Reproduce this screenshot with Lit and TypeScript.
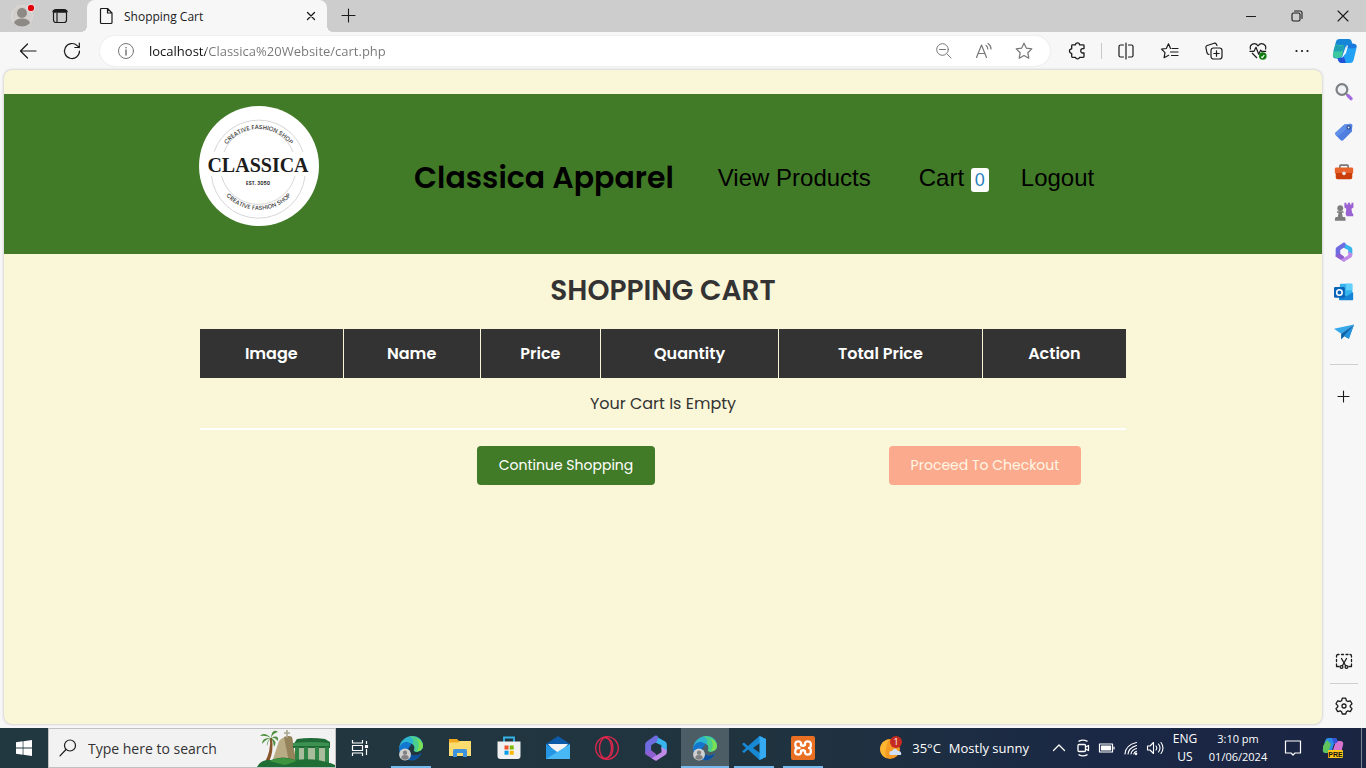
import { LitElement, html, css, svg } from "lit";
import { customElement } from "lit/decorators.js";
import { classMap } from "lit/directives/class-map.js";

const line = (size: number, body: unknown, width = 1) => html`<svg
  width=${size} height=${size} viewBox="0 0 20 20" fill="none" stroke="currentColor"
  stroke-width=${width} stroke-linecap="round" stroke-linejoin="round" aria-hidden="true">${body}</svg>`;

const art = (size: number, body: unknown) => html`<svg
  width=${size} height=${size} viewBox="0 0 24 24" aria-hidden="true">${body}</svg>`;

const office = (size: number) => art(size, svg`
  <path d="M11 .8L20.500 6Q22 7 22 9v6l-5-2V9.500L9.500 6z" fill="#39b5ee"/>
  <path d="M11 .8q1-.6 2 0l1 .7-1 4.500-5.500 3.500V16L2 18V8.500Q2 7 3.500 6z" fill="#6f6be0"/>
  <path d="M2 15.500l5.500-1.500 4.500 3.500 1 5.700q-1 .6-2 0l-7.500-4.500Q2 17.500 2 15.500z" fill="#8d5fd0"/>
  <path d="M17 11l5 3v1.500q0 2-1.500 3L13 23.200q-1 .6-2 0l-3-1.800 9-5.400z" fill="#c08be8"/>`);

const icons = {
  back: () => line(20, svg`<path d="M18 10H2.500M9.500 3l-7 7 7 7"/>`, 1.2),
  reload: () => line(20, svg`<path d="M17.500 10a7.500 7.500 0 1 1-2.300-5.400L17.300 6.500M17.300 2v4.500h-4.500"/>`, 1.2),
  info: () => line(20, svg`<circle cx="10" cy="10" r="7.500"/><path d="M10 9v5M10 6.500v.3" stroke-width="1.500"/>`),
  zoomOut: () => line(20, svg`<circle cx="8.500" cy="8.500" r="5.800"/><path d="M13 13l4 4M5.500 8.500h6"/>`),
  readAloud: () => line(20, svg`<path d="M2.500 16.500L7.500 4l5 12.500M4.300 12.500h6.500M12 4.500c1.200.8 1.800 2 1.800 3.500M14 2.500c2 1.300 3 3.200 3 5.500"/>`, 1.2),
  star: () => line(20, svg`<path d="M10 2.200l2.400 5 5.400.7-4 3.800 1 5.500-4.800-2.700-4.800 2.700 1-5.500-4-3.800 5.400-.7z"/>`, 1.2),
  puzzle: () => line(20, svg`<path d="M5.500 3.800h3c0-2.600 4-2.600 4 0h3.700q.8 0 .8.800v3h-1.300c-2.600 0-2.600 4.400 0 4.400h1.300v3.600q0 .8-.8.800h-3.700c-.3 2-3.700 2-4 0h-3q-.8 0-.8-.8v-3.200c-3 0-3-4.600 0-4.600V4.600q0-.8.8-.8z"/>`, 1.3),
  split: () => line(20, svg`<path d="M7.500 4H4.500Q3 4 3 5.500v9Q3 16 4.500 16h3M12.500 4h3Q17 4 17 5.500v9q0 1.500-1.500 1.500h-3M10 2v16"/>`, 1.2),
  favourites: () => line(20, svg`<path d="M10.500 7.500L8.500 2.800 6.300 7.500l-4.800.7 3.500 3.500-.9 5 4.600-2.400M12 7.500h6M10.500 11h7.500M11.500 14.500h6.500"/>`, 1.2),
  collections: () => line(20, svg`<rect x="7" y="7" width="11" height="11" rx="2.500"/><path d="M12.500 9.800v5.400M9.800 12.500h5.400M5 13.500l-.8-.3Q3.500 13 3 11.800L1.900 6.500q-.2-1.500 1.300-2l7-2.300q1.500-.3 2.200 1L13 4.500"/>`, 1.2),
  heart: () => html`<svg width="20" height="20" viewBox="0 0 20 20" fill="none" stroke="currentColor" stroke-width="1.2" stroke-linejoin="round" aria-hidden="true"><path d="M2.500 8.500C1 3 7 .8 10 4.800 13 .8 19 3 17.500 8.500M4 12l5 5M1.500 10.300H6l2-4 2.700 7 2-4.300 1 1.300h4.500"/><circle cx="14.800" cy="15" r="3.800" fill="#107c10" stroke="none"/><path d="M13.300 15.800l1 .8 2-2.600" stroke="#fff"/></svg>`,
  dots: () => line(20, svg`<path d="M4.500 10h.01M10 10h.01M15.500 10h.01"/>`, 2.2),
  close: () => line(20, svg`<path d="M6.500 6.500l7 7M13.500 6.500l-7 7"/>`, 1.3),
  winClose: () => line(20, svg`<path d="M5 5l10 10M15 5L5 15"/>`, 1.1),
  minimise: () => line(20, svg`<path d="M5.500 10.500h9"/>`, 1.1),
  restore: () => line(20, svg`<rect x="5" y="7" width="8" height="8" rx="1.500"/><path d="M7.500 5h5.500q2 0 2 2v5.500"/>`, 1.1),
  plus: () => line(20, svg`<path d="M9.500 3v13M3 9.500h13"/>`, 1.1),
  plusSmall: () => line(20, svg`<path d="M9.500 4v11M4 9.500h11"/>`, 1.1),
  page: () => line(20, svg`<path d="M5 2.500h6.500L16 7v9.500q0 1-1 1H5.500q-1 0-1-1v-13q0-1 1-1M11.500 2.500V7H16"/>`, 1.2),
  workspaces: () => line(20, svg`<rect x="3.500" y="3.500" width="13" height="13" rx="2.500"/><path d="M4 5.200h12" stroke-width="3"/><path d="M7 7v9"/>`, 1.2),
  snip: () => line(20, svg`<path d="M2.500 15V13M2.500 10.500v-2M2.500 6V5q0-1.500 1.500-1.500h1M7.500 3.500h2M12 3.500h2M16 3.500q1.500 0 1.500 1.500v1M17.500 8.500v2M17.500 13v2M2.500 15.500h2.500M15 15.500h2.500M7.500 7.500l4 7M12.500 7.500l-4 7"/><circle cx="7.500" cy="16" r="1.400"/><circle cx="12.500" cy="16" r="1.400"/>`, 1.3),
  gear: () => line(20, svg`<circle cx="10" cy="10" r="2"/><path d="M8.300 2.200h3.400l.7 2.500 1.400.8 2.500-.7 1.700 3-1.800 1.800v1.200l1.800 1.800-1.700 3-2.500-.7-1.400.8-.7 2.300H8.300l-.7-2.300-1.400-.8-2.500.7-1.700-3 1.800-1.800V9.600L2 7.800l1.700-3 2.500.7 1.400-.8z"/>`, 1.3),
  search: () => line(20, svg`<circle cx="12" cy="7.500" r="5.500"/><path d="M8 11.500L2 17.800"/>`, 1.2),

  copilot: () => art(26, svg`
    <path d="M7 1h8.500q2 0 2.600 2l1 3.500h-4q-2 0-2.700 2L9.500 17q-.8 2-3 2H4q-4 0-3-4.500L3.500 4Q4.300 1 7 1z" fill="#1687d8"/>
    <path d="M1 14.500L3.300 6l8 1-2 9.300Q8.500 18.500 6.500 18.500H4q-4 0-3-4z" fill="#3dc8a0"/>
    <path d="M3.300 6q4 2 8 1l-1.500 5q-4 1-8.500 0z" fill="#1fa3b4"/>
    <path d="M17 23H8.500q-2 0-2.600-2L5 18.500h2q3.500 0 4.200-3l2.300-8.300q.6-2 2.800-2h3.200q4 0 3 4.500L20 20q-.8 3-3 3z" fill="#22a2f5"/>
    <path d="M14 6q1-.8 2.300-.8h3.200q3.500 0 3.200 3.300-4 2-9.500.5z" fill="#1c78dc"/>
    <path d="M5 18.500h3q2 0 3-1.500l1.800 6H8.500q-2 0-2.600-2z" fill="#2352d4"/>
    <path d="M13.800 7l-3.300 9q1.800-.3 2.500-2.500l1.800-6.500z" fill="#fff"/>`),
  sideSearch: () => art(20, svg`<circle cx="9.500" cy="9" r="6.500" fill="#eef2f5" stroke="#7d8083" stroke-width="2.600"/><path d="M14.500 14l2 2" stroke="#7d8083" stroke-width="2.500"/><path d="M17 16.500l3.500 3.500" stroke="#a36be0" stroke-width="4" stroke-linecap="round"/>`),
  tag: () => art(20, svg`<path d="M12.500 3L20 2q2 0 2 2l-.5 7.500L11 22q-1.500 1-3 0L2 15.500q-1-1.500 0-3z" fill="#4f7fe0"/><path d="M2 12.500L12.500 3 20 2l1.500 1L4 17.500l-2-2q-1-1.500 0-3z" fill="#6190e8"/><circle cx="17.500" cy="6.500" r="2.600" fill="#2a4a93"/><circle cx="17.500" cy="6.500" r="1.200" fill="#dce8ff"/>`),
  toolbox: () => art(22, svg`<path d="M7.500 8V5.500q0-1 1-1h7q1 0 1 1V8" fill="none" stroke="#777" stroke-width="1.800"/><rect x="2" y="7" width="20" height="7" rx="1.500" fill="#e8632c"/><path d="M3 13h18v5q0 2-2 2H5q-2 0-2-2z" fill="#cb3e0c"/><circle cx="12" cy="13.500" r="2" fill="#e6e6e6"/>`),
  games: () => art(20, svg`<g fill="#7d7d7d"><circle cx="7.500" cy="7.500" r="3.500"/><path d="M3.500 11h8v2h-2l1 5H13q1 1.500 1 4.500H1Q1 19.500 2 18h2.500l1-5h-2z"/></g><path d="M12.500 1h2.300v2h1.800V1h2.600v2H21V1h2.300v5.500L21 8l.6 5 1.500 1.500v2.500h-8L14 14l.8-6-2.300-1.500z" fill="#9a62d2"/>`),
  office: () => office(20),
  officeLarge: () => office(26),
  outlook: () => art(20, svg`<rect x="7" y="2" width="15" height="17" rx="1.500" fill="#34b3ee"/><path d="M14.500 2H22v8h-7.500z" fill="#62d0fa"/><path d="M6 12l9 5 8-5v9q0 1-1 1H7q-1 0-1-1z" fill="#1684d6"/><rect x="0" y="6" width="13" height="13" rx="1.500" fill="#0a64b8"/><circle cx="6.500" cy="12.500" r="3.300" fill="none" stroke="#fff" stroke-width="1.900"/>`),
  send: () => art(20, svg`<path d="M0 8L24 3 8.500 14z" fill="#35a8ea"/><path d="M24 3L8.500 14V21l4-4 5 3z" fill="#0f64a8"/><path d="M24 3L12 16.500 18 20z" fill="#2292dc"/>`),

  windows: () => html`<svg width="16" height="16" viewBox="0 0 16 16" fill="#fff" aria-hidden="true"><path d="M0 2.200l6.700-.9v6.300H0zM7.400 1.200L16 0v7.600H7.400zM0 8.400h6.700v6.300L0 13.800zM7.400 8.400H16V16l-8.600-1.200z"/></svg>`,
  taskView: () => line(20, svg`<path d="M2.500 2v3h10V2M2.500 18v-3h10v3M2.500 7.500h10v5h-10zM16.500 3v3M16.500 11v6" stroke-linecap="butt"/><rect x="15.500" y="7.500" width="2" height="2" fill="currentColor"/>`, 1.2),
  edge: () => art(26, svg`
    <path d="M1 12.500C2 -2 23 -3 23 10c0 5-6 6.500-8.500 4.500C17 10.500 13 7 9 8c-4 .5-7 3-8 4.500z" fill="#2cb4d0"/>
    <path d="M10 1C19 .5 23 5.500 23 10c0 5-6 6.500-8.500 4.500 2-3 0-6-1-6.500C15 6 14 3 10 1z" fill="#4ccf8a"/>
    <path d="M17 3c4 2 6 4.500 6 7 0 4-3.500 5.300-6 5.200 3-3.200 3-8.200 0-12.200z" fill="#7be052"/>
    <path d="M1 12.500C2 8 6 5.500 10 7c2 .8 2.500 2 1.500 3-4 3.500-1 10 5 9 2-.2 4-1.500 5-2.500-2 5-6 7-10 6.800C5 23 1 18.500 1 12.500z" fill="#1477cf"/>
    <path d="M11.500 10c-4 3.500-1 10 5 9 2-.2 4-1.500 5-2.500-2 4-5 6.500-9 6.800-5-.5-7-9-1-13.300z" fill="#0c4f9e"/>
    <circle cx="6.500" cy="18" r="5.500" fill="#cfcfcf"/><circle cx="6.500" cy="16.300" r="2" fill="#818181"/><path d="M3 21.500q0-3 3.500-3t3.500 3q-3.500 2.800-7 0z" fill="#818181"/>`),
  explorer: () => art(24, svg`<path d="M1 3h8l2 2H22q1 0 1 1v14H1z" fill="#f0a81f"/><path d="M1 6.500h9l2-1.500h11v15H1z" fill="#fddc6f"/><path d="M5 21v-6.500q0-1.500 1.500-1.500h11q1.500 0 1.500 1.500V21h-4v-4H9v4z" fill="#3e93dc"/>`),
  store: () => art(24, svg`<path d="M7 6V1.500h10V6" fill="none" stroke="#35b5e9" stroke-width="1.800"/><path d="M.5 5.500h23V20q0 3-3 3h-17q-3 0-3-3z" fill="#f1f1f1"/><path d="M7.500 9.500h4v4h-4z" fill="#f0502b"/><path d="M12.700 9.500h4v4h-4z" fill="#7fb902"/><path d="M7.500 14.700h4v4h-4z" fill="#069de8"/><path d="M12.700 14.700h4v4h-4z" fill="#fcb600"/>`),
  mail: () => art(24, svg`<path d="M0 8L12 0l12 8v4H0z" fill="#0c5aa8"/><path d="M2 8h20l-7 8H9z" fill="#f5f5f5"/><path d="M0 8l12 8.500L24 8v15H0z" fill="#2496e3"/><path d="M0 23L24 8v15z" fill="#48b8f5"/>`),
  opera: () => art(24, svg`<g fill="none" stroke="#e0264d" stroke-width="1.300"><circle cx="12" cy="12" r="11.300"/><ellipse cx="10.500" cy="12" rx="6" ry="10.500"/><path d="M11 2.500q3-1 5.500 3 3 6.500 0 13-2.500 4-5.500 3"/></g>`),
  code: () => art(24, svg`<path d="M17.500 0L24 3v18l-6.500 3L6 13.500 2 17l-2-1.500L4 12 0 8l2-1.500 4 3.500zM18 7l-7 5 7 5z" fill="#1688d4" fill-rule="evenodd"/><path d="M17.500 0L24 3v18l-6.500 3z" fill="#35a9f1"/>`),
  xampp: () => art(24, svg`<rect width="24" height="24" rx="2" fill="#e96f22"/><path d="M9.500 12H7.500C4 12 3.500 7.500 5 6q3.500-1.500 5 .8V9q2 1.500 4 0V6.800q1.500-2.300 5-.8c1.500 1.500 1 6-1 6 2 0 2.500 4.500 1 6q-3.500 1.500-5-.8V15q-2-1.500-4 0v2.200q-1.500 2.300-5 .8c-1.500-1.500-1-6 2-6" fill="none" stroke="#fff" stroke-width="2.300" stroke-linejoin="round"/>`),
  weather: () => html`<svg width="26" height="26" viewBox="0 0 26 26" aria-hidden="true"><circle cx="12" cy="14" r="10" fill="#f59a23"/><path d="M5 7a10 10 0 0 0 3 16q-2-8 3-19z" fill="#fdb632"/><path d="M12 20q-2-4 2-4 3-5 6 0 4 0 3 4z" fill="#cfe0f6"/><circle cx="18" cy="7" r="6" fill="#c52b20"/><text x="18" y="10" class="badge" text-anchor="middle">1</text></svg>`,
  chevron: () => line(20, svg`<path d="M4.500 12.500L10 7l5.500 5.500"/>`, 1.3),
  meet: () => line(20, svg`<rect x="5" y="6.500" width="7.500" height="7" rx="1"/><path d="M12.500 9l3-1.500v5l-3-1.500M6 3.200q4-2 8 0M6 16.800q4 2 8 0"/>`, 1.3),
  battery: () => line(20, svg`<rect x="2.500" y="6" width="13" height="8"/><rect x="4.500" y="8" width="9" height="4" fill="currentColor"/><path d="M17 9v2"/>`, 1.2),
  wifi: () => line(20, svg`<path d="M4 16Q4.500 7 15.500 4.500M7 16q.5-6 8.500-8.500M10 16q.5-4 5.500-5.500M12.800 16q.2-2 2.700-2.800"/><circle cx="15" cy="15.800" r=".8" fill="currentColor"/>`, 1.1),
  volume: () => line(20, svg`<path d="M2.500 8H5l3.500-3.500v11L5 12H2.500zM11 8q1.500 2 0 4M13.500 6q3 4 0 8M16 4.500q4 5.500 0 11"/>`, 1.1),
  notes: () => line(20, svg`<path d="M2.500 3h15v12H12l-2 2-2-2H2.500z"/>`, 1.2),
  pre: () => html`<svg width="24" height="24" viewBox="0 0 24 24" aria-hidden="true"><path d="M7 2h8l2 4-4 2-3 9H5q-4 0-3-4l2-8q.8-3 3-3z" fill="#2b8de8"/><path d="M2 10l4-6 4 4-3 9H5q-4 0-3-4z" fill="#5fc45b"/><path d="M15 5h4q4 0 3 4l-2 8h-9z" fill="#d873cf"/><path d="M11 2h4l2 4-4 2z" fill="#3852d8"/><rect x="7" y="14" width="15" height="8" rx="1" fill="#ffc61a"/><text x="14.500" y="20.500" class="pre" text-anchor="middle">PRE</text></svg>`,
};

const headings: [string, string][] = [
  ["Image", "c1"], ["Name", "c2"], ["Price", "c3"], ["Quantity", "c4"], ["Total Price", "c5"], ["Action", "c6"],
];

@customElement("shop-page")
class ShopPage extends LitElement {
  static styles = css`
    :host { display: block; background: #faf6d8; padding-top: 24px; color: #333; font-family: Poppins, Inter, sans-serif; }
    .header { background: #427b28; min-height: 160px; }
    .inner { max-width: 928px; margin: 0 auto; display: flex; align-items: center; box-sizing: border-box; padding-top: 12px; }
    .logo { display: block; flex: none; margin-right: 95px; }
    .ring { fill: none; stroke: #c4c4c4; stroke-width: 0.7; }
    .arc { font: 500 6px Poppins, Inter, sans-serif; fill: #444; }
    .name { font: bold 20px "Liberation Serif", serif; fill: #1c1c1c; }
    .est { font: 600 5px Poppins, Inter, sans-serif; fill: #222; }
    nav { display: flex; align-items: center; flex: 1; padding-top: 24px; }
    nav a { color: #000; text-decoration: none; font: 24px/36px "Liberation Sans", Arial, sans-serif; white-space: nowrap; }
    nav .brand { font: 600 30px/44px Poppins, Inter, sans-serif; margin-right: 44px; }
    nav .products { margin-right: 48px; }
    nav .cart { margin-right: 32px; }
    .count { display: inline-block; background: #fff; color: #2980b9; border-radius: 3px; padding: 0 4px; font-size: 18px; line-height: 24px; }
    main { max-width: 926px; margin: 0 auto; }
    h1 { margin: 0; padding: 16px 0 17px; text-align: center; font-size: 28px; line-height: 42px; font-weight: 600; }
    table { width: 100%; border-collapse: collapse; table-layout: fixed; }
    th { background: #333; color: #fff; font-size: 16px; line-height: 24px; font-weight: 600; padding: 13px 0 12px; border-right: 1px solid #faf6d8; }
    th:last-child { border-right: 0; }
    td { text-align: center; font-size: 16px; line-height: 24px; padding: 14px 0 12px; border-bottom: 2px solid #fff; }
    .c1 { width: 15.4%; } .c2 { width: 14.7%; } .c3 { width: 12.9%; } .c4 { width: 19.1%; } .c5 { width: 21.9%; }
    .actions { display: flex; justify-content: flex-end; gap: 234px; padding: 16px 45px 0 0; }
    .btn { height: 39px; border: 0; border-radius: 4px; color: #fff; font-family: inherit; font-size: 14px; font-weight: 400; background: #427b28; padding: 0; width: 178px; }
    .btn.checkout { background: #fbaa8d; color: #fff6e4; width: 192px; }
  `;
  render() {
    return html`
      <header class="header"><div class="inner">
        <svg class="logo" width="120" height="120" viewBox="0 0 120 120" role="img" aria-label="Classica">
          <defs><path id="top" d="M19.500 63A40 40 0 0 1 99.500 63"/><path id="bottom" d="M15.500 60A44 44 0 0 0 103.500 60"/></defs>
          <circle cx="60" cy="60" r="60" fill="#fff"/>
          <path class="ring" d="M15 46A47 47 0 0 1 104 46M25 46A37 37 0 0 1 94 46M12.500 70A47 47 0 0 0 106 70M22.500 70A38 38 0 0 0 96 70"/>
          <text class="arc" text-anchor="middle"><textPath href="#top" startOffset="50%">CREATIVE FASHION SHOP</textPath></text>
          <text class="arc" text-anchor="middle"><textPath href="#bottom" startOffset="50%">CREATIVE FASHION SHOP</textPath></text>
          <text class="name" x="59" y="66" text-anchor="middle">CLASSICA</text>
          <text class="est" x="59" y="79" text-anchor="middle">EST. 3050</text>
        </svg>
        <nav>
          <a class="brand" href="#">Classica Apparel</a>
          <a class="products" href="#">View Products</a>
          <a class="cart" href="#">Cart <span class="count">0</span></a>
          <a href="#">Logout</a>
        </nav>
      </div></header>
      <main>
        <h1>SHOPPING CART</h1>
        <table>
          <thead><tr>${headings.map(([t, c]) => html`<th class=${c} scope="col">${t}</th>`)}</tr></thead>
          <tbody><tr><td colspan="6">Your Cart Is Empty</td></tr></tbody>
        </table>
        <div class="actions">
          <button class="btn">Continue Shopping</button>
          <button class="btn checkout">Proceed To Checkout</button>
        </div>
      </main>`;
  }
}

type IconName = keyof typeof icons;
const apps: [IconName, string, string][] = [
  ["edge", "Microsoft Edge", "open"], ["explorer", "File Explorer", ""], ["store", "Microsoft Store", ""],
  ["mail", "Mail", ""], ["opera", "Opera", ""], ["officeLarge", "Microsoft 365", ""],
  ["edge", "Edge window", "current"], ["code", "Visual Studio Code", "open"], ["xampp", "XAMPP", "open"],
];
const side: [IconName, string][] = [
  ["sideSearch", "Search"], ["tag", "Shopping"], ["toolbox", "Tools"], ["games", "Games"],
  ["office", "Microsoft 365"], ["outlook", "Outlook"], ["send", "Drop"],
];

@customElement("app-root")
class AppRoot extends LitElement {
  static styles = css`
    :host { display: flex; flex-direction: column; height: 100vh; background: #f7f7f7; color: #1b1b1b; font-family: "Segoe UI", "Open Sans", sans-serif; overflow: hidden; }
    button { border: 0; background: none; color: inherit; padding: 0; margin: 0; font: inherit; display: flex; align-items: center; justify-content: center; flex: none; }
    input { border: 0; outline: 0; padding: 0; min-width: 0; flex: 1; font-family: inherit; background: none; }
    svg { display: block; flex: none; }
    .tabs { display: flex; height: 32px; background: #cdcdcd; flex: none; }
    .tabs .avatar { width: 44px; height: 32px; }
    .tabs .spaces { width: 32px; margin-right: 11px; }
    .tab { position: relative; width: 240px; box-sizing: border-box; background: #f7f7f7; border-radius: 8px 8px 0 0; display: flex; align-items: center; padding: 0 6px 0 9px; font-size: 12px; }
    .tab::before, .tab::after { content: ""; position: absolute; bottom: 0; width: 6px; height: 6px; }
    .tab::before { left: -6px; background: radial-gradient(circle at 0 0, #cdcdcd 6px, #f7f7f7 6px); }
    .tab::after { right: -6px; background: radial-gradient(circle at 100% 0, #cdcdcd 6px, #f7f7f7 6px); }
    .title { flex: 1; margin-left: 8px; font-size: 12px; }
    .new { width: 44px; }
    .space { flex: 1; }
    .win { width: 46px; }
    .bar { display: flex; align-items: center; height: 38px; padding-left: 6px; flex: none; }
    .tool { width: 44px; height: 32px; }
    .address { display: flex; align-items: center; flex: 1; height: 30px; margin: 0 5px 0 6px; padding: 0 6px 0 16px; background: #fff; border-radius: 15px; color: #767676; box-shadow: 0 0 2px #ddd; }
    .url { margin-left: 13px; font-size: 13px; line-height: 20px; color: transparent; background: linear-gradient(90deg, #111 57px, #767676 57px); background-clip: text; -webkit-background-clip: text; }
    .mini { width: 40px; height: 30px; }
    .rule { width: 1px; height: 16px; background: #c8c8c8; margin: 0 2px; }
    .copilot { width: 42px; }
    .body { display: flex; flex: 1; min-height: 0; }
    .page { flex: 1; margin: 0 0 4px 4px; border-radius: 8px; overflow: hidden; background: #faf6d8; box-shadow: 0 0 3px #b5b5b5; }
    .side { display: flex; flex-direction: column; align-items: center; width: 44px; padding: 2px 0; box-sizing: border-box; flex: none; }
    .side button { width: 40px; height: 40px; }
    .divider { width: 28px; height: 1px; background: #cfcfcf; margin: 2px 0; flex: none; }
    .divider.upper { margin: 12px 0; }
    .task { display: flex; height: 40px; flex: none; color: #fff; background: linear-gradient(90deg, #223840, #20343f 55%, #1a2745 82%, #1a2542); }
    .task button { height: 40px; }
    .start { width: 48px; }
    .search { display: flex; align-items: center; width: 288px; box-sizing: border-box; background: #f2f2f2; border: 1px solid #c0c0c0; color: #1b1b1b; padding-left: 9px; }
    .search input { margin-left: 10px; font-size: 14px; color: #333; }
    .search input::placeholder { color: #333; opacity: 1; }
    .view { width: 48px; margin-right: 3px; }
    .apps { display: flex; gap: 1px; }
    .app { position: relative; width: 48px; }
    .app.open::after, .app.current::after { content: ""; position: absolute; bottom: 0; left: 4px; right: 4px; height: 2px; background: #76b9ed; }
    .app.current { background: #4d5d65; }
    .app.current::after { left: 0; right: 0; }
    .task .weather { gap: 8px; font-size: 13px; margin-right: 18px; }
    .badge { font: 9px "Open Sans", sans-serif; fill: #fff; }
    .pre { font: bold 7px "Liberation Sans", sans-serif; fill: #111; }
    .tray { width: 24px; }
    .task .stack { font-size: 12px; line-height: 18px; text-align: center; flex-direction: column; }
    .task .lang { width: 36px; }
    .task .clock { width: 70px; font-size: 11px; }
    .notes { width: 40px; }
    .pilot { width: 40px; margin-right: 8px; border: 0; }
    .edge { width: 4px; border-left: 1px solid #7c8494; }
  `;
  render() {
    const b = (cls: string, name: IconName, label: string) =>
      html`<button class=${cls} aria-label=${label}>${icons[name]()}</button>`;
    return html`
      <div class="tabs">
        <button class="avatar" aria-label="Profile"><svg width="26" height="26" viewBox="0 0 26 26"><circle cx="13" cy="13" r="10.500" fill="#d2d0cd" stroke="#dedbd7"/><circle cx="13" cy="10" r="5" fill="#8d8a86"/><path d="M5 20q1-4.500 8-4.500t8 4.500q-3.500 3.500-8 3.500T5 20z" fill="#8d8a86"/><circle cx="22" cy="5" r="3.800" fill="#e3000b" stroke="#eee"/></svg></button>
        ${b("spaces", "workspaces", "Workspaces")}
        <div class="tab">${icons.page()}<span class="title">Shopping Cart</span>${b("", "close", "Close tab")}</div>
        ${b("new", "plus", "New tab")}
        <div class="space"></div>
        ${b("win", "minimise", "Minimise")}${b("win", "restore", "Restore")}${b("win", "winClose", "Close")}
      </div>
      <div class="bar">
        ${b("tool", "back", "Back")}${b("tool", "reload", "Reload")}
        <div class="address">
          ${icons.info()}
          <input class="url" aria-label="Address" .value=${"localhost/Classica%20Website/cart.php"} />
          ${b("mini", "zoomOut", "Zoom")}${b("mini", "readAloud", "Read aloud")}${b("mini", "star", "Add favourite")}
        </div>
        ${b("tool", "puzzle", "Extensions")}<div class="rule"></div>
        ${b("tool", "split", "Split screen")}${b("tool", "favourites", "Favourites")}${b("tool", "collections", "Collections")}
        ${b("tool", "heart", "Browser essentials")}${b("tool", "dots", "More")}${b("copilot", "copilot", "Copilot")}
      </div>
      <div class="body">
        <shop-page class="page"></shop-page>
        <aside class="side">
          ${side.map(([n, l]) => b("", n, l))}
          <div class="divider upper"></div>
          ${b("", "plusSmall", "Customise")}
          <div class="space"></div>
          ${b("", "snip", "Screenshot")}
          <div class="divider"></div>
          ${b("", "gear", "Settings")}
        </aside>
      </div>
      <footer class="task">
        ${b("start", "windows", "Start")}
        <label class="search">${icons.search()}
          <input placeholder="Type here to search" aria-label="Search" />
          <svg width="78" height="38" viewBox="0 0 78 38" aria-hidden="true">
            <path d="M15 33L22 12q5-6 13-4l4 25z" fill="#b9ab84"/><path d="M27 8q5-2 8 0l4 25h-7z" fill="#94825a"/>
            <path d="M30 1v8M27 4h6" stroke="#aaa58e" stroke-width="1.600"/>
            <path d="M8 33q6-11 5-24l2 0q2 13-3 24z" fill="#87532b"/>
            <g fill="#4d8f3d"><path d="M14 9Q7 2 3 7q6-1 11 2z"/><path d="M14 9Q15-1 21 3q-5 1-7 6z"/><path d="M14 9q8-4 7 3-3-4-7-3z"/><path d="M14 9Q5 8 5 15q4-5 9-6z"/><path d="M14 9q7 3 3 9 0-5-3-9z"/><path d="M14 9Q9 13 10 17q1-5 4-8z"/></g>
            <path d="M39 18h32v18H39z" fill="#a9bd9d"/>
            <path d="M36 16l4-6q14-2 28 0l5 3v6H36z" fill="#1f6a36"/><path d="M36 14q18-2 36 0v3H36z" fill="#3c9150"/>
            <g fill="#2f8445"><path d="M38 18h4v16h-4zM47 18h4v16h-4zM58 18h4v16h-4zM68 18h4v16h-4z"/></g>
            <path d="M0 38q4-8 14-7 12-5 24 0 22-3 40 5v2z" fill="#1f6e36"/><path d="M12 32q14-6 28 0l-12 4z" fill="#3f9440"/>
          </svg>
        </label>
        ${b("view", "taskView", "Task view")}
        <div class="apps">${apps.map(([n, l, s]) => html`<button
          class=${classMap({ app: true, open: s === "open", current: s === "current" })} aria-label=${l}>${icons[n]()}</button>`)}</div>
        <div class="space"></div>
        <button class="weather">${icons.weather()}<span>35°C</span><span>Mostly sunny</span></button>
        ${b("tray", "chevron", "Hidden icons")}${b("tray", "meet", "Meet now")}${b("tray", "battery", "Battery")}${b("tray", "wifi", "Network")}${b("tray", "volume", "Volume")}
        <button class="stack lang"><span>ENG</span><span>US</span></button>
        <button class="stack clock"><span>3:10 pm</span><span>01/06/2024</span></button>
        ${b("notes", "notes", "Notifications")}${b("pilot", "pre", "Copilot preview")}
        <div class="edge"></div>
      </footer>`;
  }
}
